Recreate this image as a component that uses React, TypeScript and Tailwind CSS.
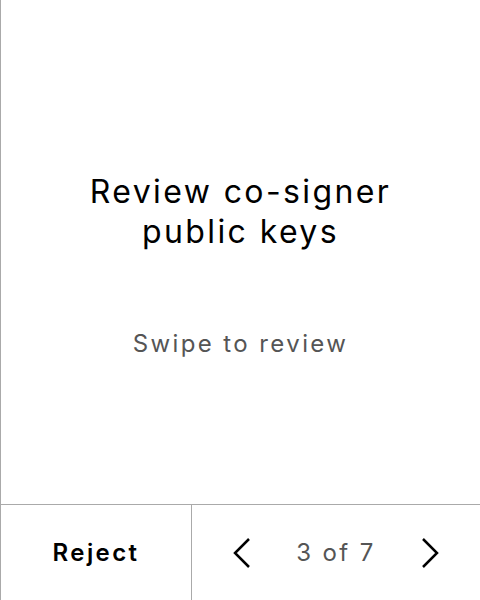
export default function App() {
  return (
    <div
      className="flex h-[600px] w-[480px] flex-col border-l border-[#aaaaaa] bg-white tracking-[2.4px]"
      style={{ fontFamily: "Inter, 'Liberation Sans', sans-serif" }}
    >
      <div className="flex flex-1 flex-col items-center pt-[172px]">
        <h1 className="text-center text-[32px] leading-[40px] font-normal text-black">
          Review co-signer
          <br />
          public keys
        </h1>
        <p className="mt-[76px] text-[24px] leading-[32px] text-[#555555]">
          Swipe to review
        </p>
      </div>
      <div className="flex h-[96px] border-t border-[#aaaaaa]">
        <button className="flex w-[191px] items-center justify-center border-r border-[#aaaaaa] text-[24px] font-semibold tracking-[2.4px] text-black">
          Reject
        </button>
        <div className="flex flex-1 items-center justify-between px-[40px]">
          <svg width="20" height="32" viewBox="0 0 20 32" fill="none">
            <polyline
              points="17,2 3,16 17,30"
              stroke="black"
              strokeWidth="2.5"
              strokeLinejoin="miter"
            />
          </svg>
          <span className="text-[24px] text-[#555555]">3 of 7</span>
          <svg width="20" height="32" viewBox="0 0 20 32" fill="none">
            <polyline
              points="3,2 17,16 3,30"
              stroke="black"
              strokeWidth="2.5"
              strokeLinejoin="miter"
            />
          </svg>
        </div>
      </div>
    </div>
  );
}
